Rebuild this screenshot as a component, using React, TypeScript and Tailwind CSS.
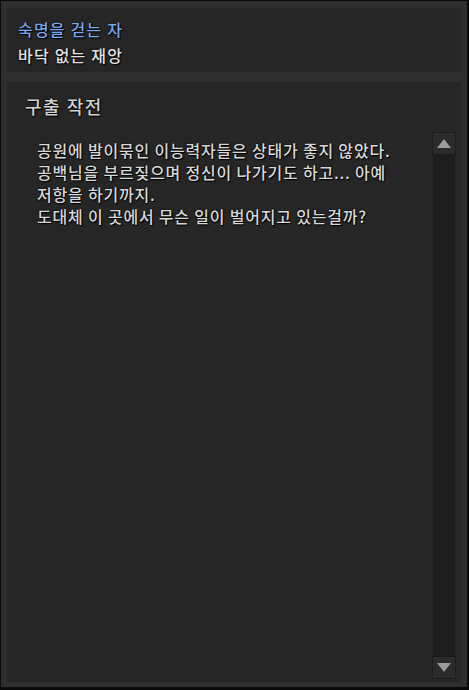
export default function App() {
  const lines = [
    "공원에 발이묶인 이능력자들은 상태가 좋지 않았다.",
    "공백님을 부르짖으며 정신이 나가기도 하고... 아예",
    "저항을 하기까지.",
    "도대체 이 곳에서 무슨 일이 벌어지고 있는걸까?",
  ];

  return (
    <div className="w-[469px] h-[690px] bg-[#2e2e2e] border-t border-l border-r-2 border-b-[3px] border-[#0a0a0a] pt-[7px] pl-[6px] pr-[6px] pb-[5px] flex flex-col gap-[10px] font-['Noto_Sans_CJK_KR','Noto_Sans',sans-serif] font-medium [text-shadow:0_0_2px_#000,1px_1px_1px_#000]">
      <div className="h-[64px] bg-[#262626] pt-[8px] pl-[11px]">
        <p className="text-[16px] leading-[26px] tracking-[1.2px] text-[#7aa8ec]">숙명을 걷는 자</p>
        <p className="text-[16px] leading-[26px] tracking-[1.2px] text-[#e2e2e2]">바닥 없는 재앙</p>
      </div>

      <div className="flex-1 bg-[#262626] flex flex-col pb-[3px]">
        <h2 className="pl-[18px] pt-[12px] text-[18px] leading-[24px] tracking-[1.5px] text-[#d2d2d2]">구출 작전</h2>
        <div className="flex flex-1 mt-[14px]">
          <div className="flex-1 pl-[30px] pt-[7px] text-[16px] leading-[22px] tracking-[0.8px] text-[#d8d8d8]">
            {lines.map((l) => (
              <p key={l}>{l}</p>
            ))}
          </div>
          <div className="w-[24px] mr-[5px] flex flex-col">
            <div className="h-[23px] bg-[#2b2b2b] border border-[#1c1c1c] flex items-center justify-center">
              <div className="w-0 h-0 border-l-[7px] border-r-[7px] border-b-[9px] border-l-transparent border-r-transparent border-b-[#9c9c9c]" />
            </div>
            <div className="flex-1 mx-[1px] bg-[#1e1e1e]" />
            <div className="h-[23px] bg-[#2b2b2b] border border-[#1c1c1c] flex items-center justify-center">
              <div className="w-0 h-0 border-l-[7px] border-r-[7px] border-t-[9px] border-l-transparent border-r-transparent border-t-[#9c9c9c]" />
            </div>
          </div>
        </div>
      </div>
    </div>
  );
}
